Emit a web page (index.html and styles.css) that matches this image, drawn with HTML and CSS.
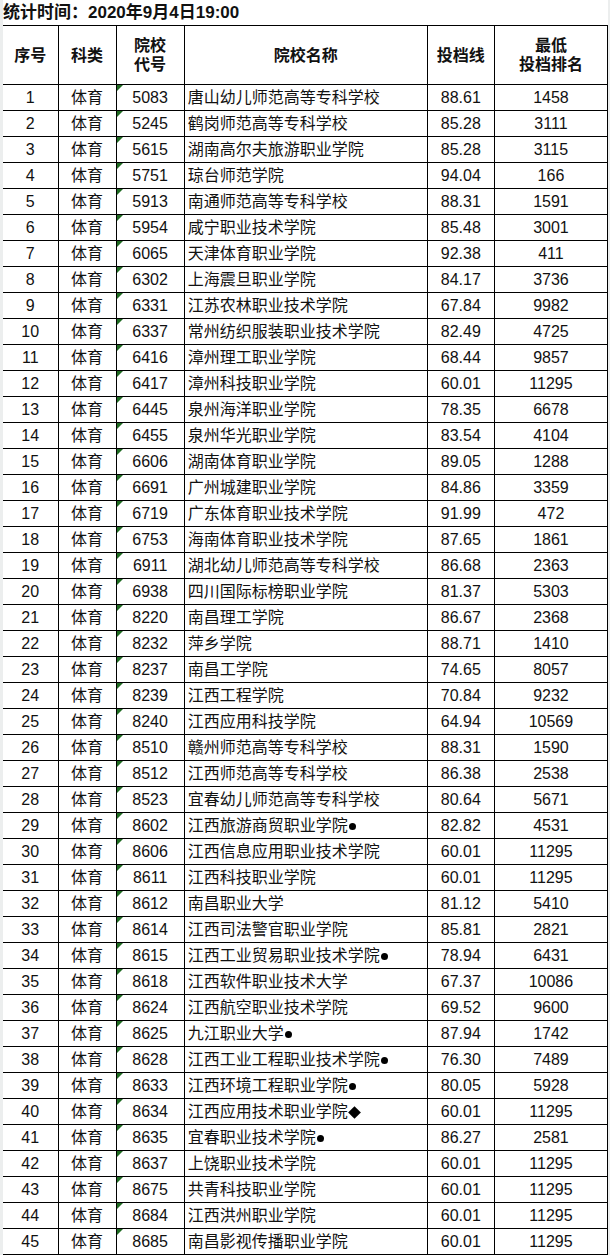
FILE: index.html
```html
<!DOCTYPE html>
<html lang="zh-CN">
<head>
<meta charset="utf-8">
<title>统计时间</title>
<link rel="stylesheet" href="styles.css">
</head>
<body>
<div class="sheet">
<div class="title">统计时间：2020年9月4日19:00</div>
<table class="grid">
<colgroup>
<col class="c-seq"><col class="c-type"><col class="c-code"><col class="c-name"><col class="c-line"><col class="c-rank">
</colgroup>
<thead>
<tr><th>序号</th><th>科类</th><th>院校<br>代号</th><th>院校名称</th><th>投档线</th><th>最低<br>投档排名</th></tr>
</thead>
<tbody>
<tr><td>1</td><td>体育</td><td class="code">5083</td><td class="name">唐山幼儿师范高等专科学校</td><td>88.61</td><td>1458</td></tr>
<tr><td>2</td><td>体育</td><td class="code">5245</td><td class="name">鹤岗师范高等专科学校</td><td>85.28</td><td>3111</td></tr>
<tr><td>3</td><td>体育</td><td class="code">5615</td><td class="name">湖南高尔夫旅游职业学院</td><td>85.28</td><td>3115</td></tr>
<tr><td>4</td><td>体育</td><td class="code">5751</td><td class="name">琼台师范学院</td><td>94.04</td><td>166</td></tr>
<tr><td>5</td><td>体育</td><td class="code">5913</td><td class="name">南通师范高等专科学校</td><td>88.31</td><td>1591</td></tr>
<tr><td>6</td><td>体育</td><td class="code">5954</td><td class="name">咸宁职业技术学院</td><td>85.48</td><td>3001</td></tr>
<tr><td>7</td><td>体育</td><td class="code">6065</td><td class="name">天津体育职业学院</td><td>92.38</td><td>411</td></tr>
<tr><td>8</td><td>体育</td><td class="code">6302</td><td class="name">上海震旦职业学院</td><td>84.17</td><td>3736</td></tr>
<tr><td>9</td><td>体育</td><td class="code">6331</td><td class="name">江苏农林职业技术学院</td><td>67.84</td><td>9982</td></tr>
<tr><td>10</td><td>体育</td><td class="code">6337</td><td class="name">常州纺织服装职业技术学院</td><td>82.49</td><td>4725</td></tr>
<tr><td>11</td><td>体育</td><td class="code">6416</td><td class="name">漳州理工职业学院</td><td>68.44</td><td>9857</td></tr>
<tr><td>12</td><td>体育</td><td class="code">6417</td><td class="name">漳州科技职业学院</td><td>60.01</td><td>11295</td></tr>
<tr><td>13</td><td>体育</td><td class="code">6445</td><td class="name">泉州海洋职业学院</td><td>78.35</td><td>6678</td></tr>
<tr><td>14</td><td>体育</td><td class="code">6455</td><td class="name">泉州华光职业学院</td><td>83.54</td><td>4104</td></tr>
<tr><td>15</td><td>体育</td><td class="code">6606</td><td class="name">湖南体育职业学院</td><td>89.05</td><td>1288</td></tr>
<tr><td>16</td><td>体育</td><td class="code">6691</td><td class="name">广州城建职业学院</td><td>84.86</td><td>3359</td></tr>
<tr><td>17</td><td>体育</td><td class="code">6719</td><td class="name">广东体育职业技术学院</td><td>91.99</td><td>472</td></tr>
<tr><td>18</td><td>体育</td><td class="code">6753</td><td class="name">海南体育职业技术学院</td><td>87.65</td><td>1861</td></tr>
<tr><td>19</td><td>体育</td><td class="code">6911</td><td class="name">湖北幼儿师范高等专科学校</td><td>86.68</td><td>2363</td></tr>
<tr><td>20</td><td>体育</td><td class="code">6938</td><td class="name">四川国际标榜职业学院</td><td>81.37</td><td>5303</td></tr>
<tr><td>21</td><td>体育</td><td class="code">8220</td><td class="name">南昌理工学院</td><td>86.67</td><td>2368</td></tr>
<tr><td>22</td><td>体育</td><td class="code">8232</td><td class="name">萍乡学院</td><td>88.71</td><td>1410</td></tr>
<tr><td>23</td><td>体育</td><td class="code">8237</td><td class="name">南昌工学院</td><td>74.65</td><td>8057</td></tr>
<tr><td>24</td><td>体育</td><td class="code">8239</td><td class="name">江西工程学院</td><td>70.84</td><td>9232</td></tr>
<tr><td>25</td><td>体育</td><td class="code">8240</td><td class="name">江西应用科技学院</td><td>64.94</td><td>10569</td></tr>
<tr><td>26</td><td>体育</td><td class="code">8510</td><td class="name">赣州师范高等专科学校</td><td>88.31</td><td>1590</td></tr>
<tr><td>27</td><td>体育</td><td class="code">8512</td><td class="name">江西师范高等专科学校</td><td>86.38</td><td>2538</td></tr>
<tr><td>28</td><td>体育</td><td class="code">8523</td><td class="name">宜春幼儿师范高等专科学校</td><td>80.64</td><td>5671</td></tr>
<tr><td>29</td><td>体育</td><td class="code">8602</td><td class="name">江西旅游商贸职业学院<span class="dot"></span></td><td>82.82</td><td>4531</td></tr>
<tr><td>30</td><td>体育</td><td class="code">8606</td><td class="name">江西信息应用职业技术学院</td><td>60.01</td><td>11295</td></tr>
<tr><td>31</td><td>体育</td><td class="code">8611</td><td class="name">江西科技职业学院</td><td>60.01</td><td>11295</td></tr>
<tr><td>32</td><td>体育</td><td class="code">8612</td><td class="name">南昌职业大学</td><td>81.12</td><td>5410</td></tr>
<tr><td>33</td><td>体育</td><td class="code">8614</td><td class="name">江西司法警官职业学院</td><td>85.81</td><td>2821</td></tr>
<tr><td>34</td><td>体育</td><td class="code">8615</td><td class="name">江西工业贸易职业技术学院<span class="dot"></span></td><td>78.94</td><td>6431</td></tr>
<tr><td>35</td><td>体育</td><td class="code">8618</td><td class="name">江西软件职业技术大学</td><td>67.37</td><td>10086</td></tr>
<tr><td>36</td><td>体育</td><td class="code">8624</td><td class="name">江西航空职业技术学院</td><td>69.52</td><td>9600</td></tr>
<tr><td>37</td><td>体育</td><td class="code">8625</td><td class="name">九江职业大学<span class="dot"></span></td><td>87.94</td><td>1742</td></tr>
<tr><td>38</td><td>体育</td><td class="code">8628</td><td class="name">江西工业工程职业技术学院<span class="dot"></span></td><td>76.30</td><td>7489</td></tr>
<tr><td>39</td><td>体育</td><td class="code">8633</td><td class="name">江西环境工程职业学院<span class="dot"></span></td><td>80.05</td><td>5928</td></tr>
<tr><td>40</td><td>体育</td><td class="code">8634</td><td class="name">江西应用技术职业学院<span class="diamond"></span></td><td>60.01</td><td>11295</td></tr>
<tr><td>41</td><td>体育</td><td class="code">8635</td><td class="name">宜春职业技术学院<span class="dot"></span></td><td>86.27</td><td>2581</td></tr>
<tr><td>42</td><td>体育</td><td class="code">8637</td><td class="name">上饶职业技术学院</td><td>60.01</td><td>11295</td></tr>
<tr><td>43</td><td>体育</td><td class="code">8675</td><td class="name">共青科技职业学院</td><td>60.01</td><td>11295</td></tr>
<tr><td>44</td><td>体育</td><td class="code">8684</td><td class="name">江西洪州职业学院</td><td>60.01</td><td>11295</td></tr>
<tr><td>45</td><td>体育</td><td class="code">8685</td><td class="name">南昌影视传播职业学院</td><td>60.01</td><td>11295</td></tr>
</tbody>
</table>
</div>
</body>
</html>
```

FILE: styles.css
```css
html, body {
  margin: 0;
  padding: 0;
}
body {
  background: #eceeee;
  font-family: "Liberation Sans", "Noto Sans CJK SC", sans-serif;
  color: #111;
}
.sheet {
  width: 605px;
  margin-left: 3px;
  background: #fff;
}
.title {
  height: 25px;
  line-height: 25px;
  font-size: 17px;
  font-weight: bold;
  padding-left: 0;
  background: #fff;
  white-space: nowrap;
  overflow: hidden;
}
.grid {
  width: 605px;
  border-collapse: collapse;
  table-layout: fixed;
}
.c-seq { width: 55px; }
.c-type { width: 58px; }
.c-code { width: 68px; }
.c-name { width: 243px; }
.c-line { width: 67px; }
.c-rank { width: 113px; }
.grid th, .grid td {
  border: 1px solid #000;
  padding: 0;
  text-align: center;
  vertical-align: middle;
  white-space: nowrap;
  overflow: hidden;
}
.grid tr > :first-child {
  border-left: none;
}
.grid th {
  height: 58px;
  font-size: 16px;
  font-weight: bold;
  line-height: 19px;
}
.grid td {
  height: 25px;
  font-size: 16px;
  line-height: 18px;
}
.grid td.name {
  text-align: left;
  padding-left: 3px;
}
.grid td.code {
  position: relative;
}
.grid td.code::before {
  content: "";
  position: absolute;
  left: 0;
  top: 0;
  width: 0;
  height: 0;
  border-top: 6px solid #1f6b22;
  border-right: 6px solid transparent;
}
.dot {
  display: inline-block;
  width: 7px;
  height: 7px;
  border-radius: 50%;
  background: #000;
  margin-left: 1px;
  vertical-align: 1px;
}
.diamond {
  display: inline-block;
  width: 9px;
  height: 9px;
  background: #000;
  transform: rotate(45deg);
  margin-left: 2px;
  vertical-align: 0;
}
```
